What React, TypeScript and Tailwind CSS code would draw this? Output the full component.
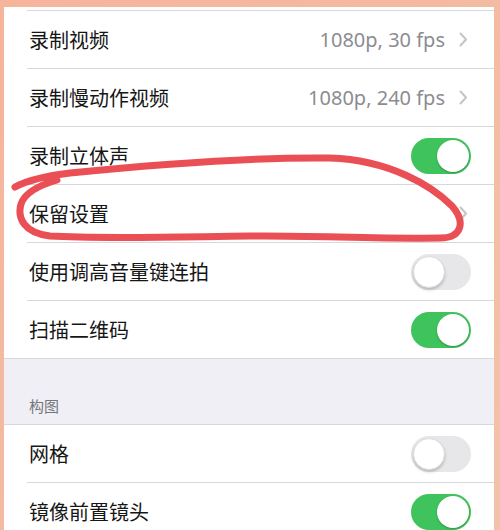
import React from 'react'

type Row =
  | { label: string; kind: 'value'; value: string }
  | { label: string; kind: 'chevron' }
  | { label: string; kind: 'toggle'; on: boolean }

const cameraRows: Row[] = [
  { label: '录制视频', kind: 'value', value: '1080p, 30 fps' },
  { label: '录制慢动作视频', kind: 'value', value: '1080p, 240 fps' },
  { label: '录制立体声', kind: 'toggle', on: true },
  { label: '保留设置', kind: 'chevron' },
  { label: '使用调高音量键连拍', kind: 'toggle', on: false },
  { label: '扫描二维码', kind: 'toggle', on: true },
]

const compositionRows: Row[] = [
  { label: '网格', kind: 'toggle', on: false },
  { label: '镜像前置镜头', kind: 'toggle', on: true },
]

function Chevron() {
  return (
    <svg width="9" height="15" viewBox="0 0 9 15" className="ml-[14px] shrink-0">
      <path d="M1.5 1.5 L7 7.5 L1.5 13.5" fill="none" stroke="#c4c4c9" strokeWidth="2" strokeLinecap="round" strokeLinejoin="round" />
    </svg>
  )
}

function Toggle({ on }: { on: boolean }) {
  return (
    <div
      className={
        on
          ? 'relative w-[60px] h-[36px] rounded-full bg-[#3fc35c] shrink-0'
          : 'relative w-[60px] h-[36px] rounded-full bg-[#e7e7ea] shrink-0'
      }
    >
      <div
        className={
          on
            ? 'absolute top-[2px] right-[2px] w-[32px] h-[32px] rounded-full bg-white shadow-[0_1px_2px_rgba(0,0,0,0.25)]'
            : 'absolute top-[2px] left-[2px] w-[32px] h-[32px] rounded-full bg-white border border-[#dcdcdf] shadow-[0_2px_3px_rgba(0,0,0,0.2)]'
        }
      />
    </div>
  )
}

function SettingRow({ row, fullLine }: { row: Row; fullLine?: boolean }) {
  return (
    <div className={fullLine ? 'h-[58px]' : 'h-[58px] pl-[23px]'}>
      <div
        className={
          fullLine
            ? 'h-full border-t border-[#d8d8dc] flex items-center pl-[25px] pr-[23px]'
            : 'h-full border-t border-[#d8d8dc] flex items-center pl-[2px] pr-[23px]'
        }
      >
        <span className="text-[20px] text-[#161616] flex-1">{row.label}</span>
        {row.kind === 'value' && (
          <>
            <span className="text-[20px] text-[#8c8c91] font-['Noto_Sans',sans-serif]">{row.value}</span>
            <Chevron />
            <div className="w-[3px]" />
          </>
        )}
        {row.kind === 'chevron' && (
          <>
            <Chevron />
            <div className="w-[3px]" />
          </>
        )}
        {row.kind === 'toggle' && <Toggle on={row.on} />}
      </div>
    </div>
  )
}

export default function App() {
  return (
    <div className="relative w-[500px] h-[530px] overflow-hidden bg-gradient-to-br from-[#f6b49b] via-[#f3bba2] to-[#f2c2aa] pt-[7px] font-['Noto_Sans_CJK_SC','Noto_Sans',sans-serif]">
      <div className="ml-[4px] w-[490px] bg-white">
        <div className="h-[3px]" />
        {cameraRows.map((row) => (
          <SettingRow key={row.label} row={row} />
        ))}

        {/* section header */}
        <div className="h-[66px] bg-[#efeff5] border-t border-[#d8d8dc] flex items-end pl-[25px] pb-[7px]">
          <span className="text-[15px] text-[#76767b]">构图</span>
        </div>

        <SettingRow row={compositionRows[0]} fullLine />
        <SettingRow row={compositionRows[1]} />
      </div>

      {/* hand drawn red loop */}
      <svg className="absolute inset-0 pointer-events-none" width="500" height="530" viewBox="0 0 500 530">
        <path
          d="M15 187 C28 180 45 176 70 173 C150 165 250 157 330 158 C390 160 432 186 452 206 C466 222 462 238 440 238 C380 239 300 235 250 236 C170 237 100 239 50 236 C24 233 17 218 21 204 C25 192 40 185 57 180"
          fill="none"
          stroke="#ea4f55"
          strokeWidth="7"
          strokeLinecap="round"
          strokeLinejoin="round"
        />
      </svg>
    </div>
  )
}
